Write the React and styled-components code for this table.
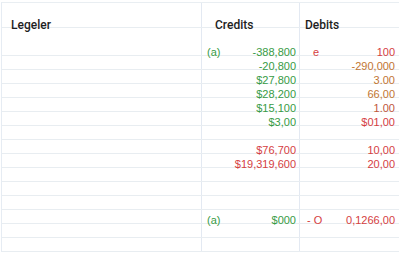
import React from 'react';
import styled, { createGlobalStyle } from 'styled-components';

const GlobalStyle = createGlobalStyle`
  html, body {
    margin: 0;
    padding: 0;
    background: #ffffff;
  }
  body {
    width: 400px;
    height: 254px;
    overflow: hidden;
    font-family: "Liberation Sans", Arial, sans-serif;
  }
`;

const colors = {
  green: '#379b45',
  red: '#d5403f',
  orange: '#c27532',
  rust: '#c0573a',
};

const Table = styled.div`
  margin: 2px 0 0 1px;
  width: 398px;
  border-top: 1px solid #e9eef2;
  border-left: 1px solid #e6ecf3;
  box-sizing: border-box;
`;

const Row = styled.div`
  display: grid;
  grid-template-columns: 199px 98px 100px;
  grid-template-rows: 1fr;
  align-items: stretch;
  height: ${(p) => p.$h || 14}px;
  box-sizing: border-box;
  border-bottom: 1px solid #e8edf1;
`;

const Cell = styled.div`
  display: flex;
  align-items: flex-end;
  justify-content: space-between;
  box-sizing: border-box;
  padding: 0 ${(p) => p.$pr || 0}px 0 ${(p) => p.$pl || 0}px;
  border-left: ${(p) => (p.$divider ? '1px solid #e3e9f2' : 'none')};
  line-height: 6px;
  font-size: 11px;
`;

const HeaderText = styled.span`
  font-family: Roboto, "Liberation Sans", sans-serif;
  font-weight: 500;
  font-size: 12px;
  line-height: 4px;
  color: #1e1e1e;
`;

const Amount = styled.span`
  color: ${(p) => colors[p.$tone] || '#333'};
  white-space: nowrap;
`;

const rows = [
  { h: 28, cl: '(a)', cv: '-388,800', ct: 'green', dl: 'e', dv: '100', dt: 'red' },
  { cv: '-20,800', ct: 'green', dv: '-290,000', dt: 'orange' },
  { cv: '$27,800', ct: 'green', dv: '3.00', dt: 'orange' },
  { cv: '$28,200', ct: 'green', dv: '66,00', dt: 'orange' },
  { cv: '$15,100', ct: 'green', dv: '1.00', dt: 'rust' },
  { cv: '$3,00', ct: 'green', dv: '$01,00', dt: 'red' },
  {},
  { cv: '$76,700', ct: 'red', dv: '10,00', dt: 'red' },
  { cv: '$19,319,600', ct: 'red', dv: '20,00', dt: 'red' },
  {},
  {},
  {},
  { cl: '(a)', cv: '$000', ct: 'green', dl: '- O', dv: '0,1266,00', dt: 'red' },
  {},
  {},
];

const App = () => (
  <>
    <GlobalStyle />
    <Table>
      <Row $h={25}>
        <Cell $pl={9}>
          <HeaderText>Legeler</HeaderText>
        </Cell>
        <Cell $divider $pl={13}>
          <HeaderText>Credits</HeaderText>
        </Cell>
        <Cell $divider $pl={5}>
          <HeaderText>Debits</HeaderText>
        </Cell>
      </Row>
      {rows.map((r, i) => (
        <Row key={i} $h={r.h}>
          <Cell />
          <Cell $divider $pl={5} $pr={3}>
            <Amount $tone={r.ct}>{r.cl || ''}</Amount>
            <Amount $tone={r.ct}>{r.cv || ''}</Amount>
          </Cell>
          <Cell $divider $pl={r.dl === 'e' ? 13 : 7} $pr={4}>
            <Amount $tone="red">{r.dl || ''}</Amount>
            <Amount $tone={r.dt}>{r.dv || ''}</Amount>
          </Cell>
        </Row>
      ))}
    </Table>
  </>
);

export default App;
